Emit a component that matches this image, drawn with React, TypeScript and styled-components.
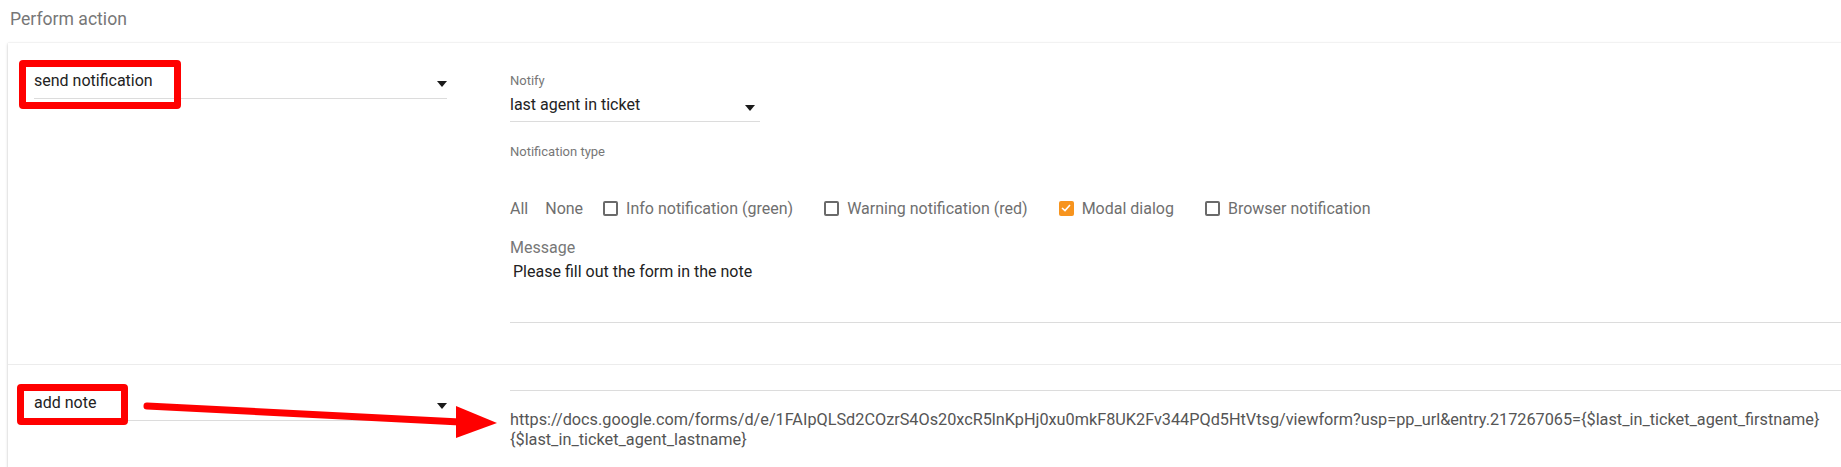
import React from 'react'
import { styled, createGlobalStyle } from 'styled-components'

const NOTE_URL =
  'https://docs.google.com/forms/d/e/1FAIpQLSd2COzrS4Os20xcR5lnKpHj0xu0mkF8UK2Fv344PQd5HtVtsg/viewform?usp=pp_url&entry.217267065={$last_in_ticket_agent_firstname}'

const notificationTypes = [
  { label: 'Info notification (green)', checked: false },
  { label: 'Warning notification (red)', checked: false },
  { label: 'Modal dialog', checked: true },
  { label: 'Browser notification', checked: false },
]

export default function App() {
  return (
    <Page>
      <GlobalStyle />
      <Title>Perform action</Title>
      <Card>
        <Row>
          <LeftCol>
            <Select>
              <span>send notification</span>
              <Caret />
              <Highlight $left={-15} $top={-10} $w={162} $h={49} />
            </Select>
          </LeftCol>
          <RightCol>
            <FieldLabel $top={3}>Notify</FieldLabel>
            <Select $width={250} $inset={5} $top={5} $pb={5}>
              <span>last agent in ticket</span>
              <Caret />
            </Select>
            <FieldLabel $top={22}>Notification type</FieldLabel>
            <CheckRow>
              <Toggle $gap={17}>All</Toggle>
              <Toggle $gap={20}>None</Toggle>
              {notificationTypes.map((t) => (
                <CheckItem key={t.label}>
                  <Box $checked={t.checked}>
                    {t.checked && (
                      <svg width="10" height="8" viewBox="0 0 10 8">
                        <polyline
                          points="1,4 4,6.6 9,1"
                          fill="none"
                          stroke="#fff"
                          strokeWidth="1.6"
                        />
                      </svg>
                    )}
                  </Box>
                  {t.label}
                </CheckItem>
              ))}
            </CheckRow>
            <MessageLabel>Message</MessageLabel>
            <MessageArea>Please fill out the form in the note</MessageArea>
          </RightCol>
        </Row>
        <Row $last>
          <LeftCol>
            <Select>
              <span>add note</span>
              <Caret />
              <Highlight $left={-17} $top={-8} $w={111} $h={41} />
            </Select>
          </LeftCol>
          <RightCol>
            <NoteArea>
              {NOTE_URL}
              {'\n'}
              {'{$last_in_ticket_agent_lastname}'}
            </NoteArea>
          </RightCol>
          <PointerArrow width="370" height="45" viewBox="0 0 370 45">
            <line
              x1="9"
              y1="6"
              x2="322"
              y2="22"
              stroke="#ff0000"
              strokeWidth="7"
              strokeLinecap="round"
            />
            <polygon points="318,6 318,38 359,23" fill="#ff0000" />
          </PointerArrow>
        </Row>
      </Card>
    </Page>
  )
}

const GlobalStyle = createGlobalStyle`
  html, body {
    margin: 0;
    padding: 0;
    background: #fff;
  }
  body {
    font-family: Roboto, "Noto Sans", "Liberation Sans", sans-serif;
    overflow: hidden;
  }
  * {
    box-sizing: border-box;
  }
`

const Page = styled.div`
  width: 1841px;
  height: 467px;
  overflow: hidden;
`

const Title = styled.h3`
  margin: 0;
  height: 43px;
  padding: 7px 0 0 10px;
  font-size: 17.6px;
  line-height: 24px;
  font-weight: 400;
  color: #777;
`

const Card = styled.div`
  margin-left: 8px;
  width: calc(100% + 20px);
  background: #fff;
  box-shadow: 0 1px 3px rgba(0, 0, 0, 0.2), 0 0 1px rgba(0, 0, 0, 0.12);
`

const Row = styled.div<{ $last?: boolean }>`
  position: relative;
  display: flex;
  align-items: flex-start;
  padding: 27px 0 41px 26px;
  border-bottom: ${(p) => (p.$last ? 'none' : '1px solid #ececec')};
`

const LeftCol = styled.div`
  width: 413px;
  flex: none;
`

const RightCol = styled.div`
  flex: 1;
  margin-left: 63px;
  display: flex;
  flex-direction: column;
`

const Select = styled.div<{ $width?: number; $inset?: number; $top?: number; $pb?: number }>`
  position: relative;
  width: ${(p) => (p.$width ? `${p.$width}px` : '100%')};
  margin-top: ${(p) => p.$top ?? 0}px;
  padding: 0 ${(p) => p.$inset ?? 0}px ${(p) => p.$pb ?? 6}px 0;
  display: flex;
  align-items: center;
  justify-content: space-between;
  font-size: 16px;
  line-height: 22px;
  color: #222;
  border-bottom: 1px solid #dcdcdc;
`

const Caret = styled.i`
  display: block;
  width: 0;
  height: 0;
  margin-top: 5px;
  border-left: 5px solid transparent;
  border-right: 5px solid transparent;
  border-top: 6px solid #1a1a1a;
`

const Highlight = styled.div<{ $left: number; $top: number; $w: number; $h: number }>`
  position: absolute;
  left: ${(p) => p.$left}px;
  top: ${(p) => p.$top}px;
  width: ${(p) => p.$w}px;
  height: ${(p) => p.$h}px;
  border: 7px solid #ff0000;
  border-radius: 4px;
  pointer-events: none;
`

const FieldLabel = styled.div<{ $top: number }>`
  margin-top: ${(p) => p.$top}px;
  font-size: 13px;
  line-height: 16px;
  color: #777;
`

const CheckRow = styled.div`
  margin-top: 37px;
  display: flex;
  align-items: center;
  height: 22px;
  font-size: 16px;
  color: #6f6f6f;
`

const Toggle = styled.span<{ $gap: number }>`
  margin-right: ${(p) => p.$gap}px;
`

const CheckItem = styled.label`
  display: flex;
  align-items: center;
  gap: 8px;
  margin-right: 31px;
`

const Box = styled.span<{ $checked: boolean }>`
  width: 15px;
  height: 15px;
  display: flex;
  align-items: center;
  justify-content: center;
  border-radius: 2px;
  border: ${(p) => (p.$checked ? 'none' : '2px solid #6a6a6a')};
  background: ${(p) => (p.$checked ? '#f7941e' : 'transparent')};
`

const MessageLabel = styled.div`
  margin-top: 19px;
  font-size: 16px;
  line-height: 20px;
  color: #777;
`

const MessageArea = styled.div`
  margin-top: 3px;
  height: 62px;
  padding-left: 3px;
  font-size: 16px;
  line-height: 22px;
  color: #222;
  border-bottom: 1px solid #dcdcdc;
`

const NoteArea = styled.div`
  margin-top: -2px;
  padding-top: 19px;
  font-size: 16.25px;
  line-height: 20px;
  color: #555;
  white-space: pre-line;
  border-top: 1px solid #dcdcdc;
`

const PointerArrow = styled.svg`
  position: absolute;
  left: 130px;
  top: 35px;
  pointer-events: none;
`
